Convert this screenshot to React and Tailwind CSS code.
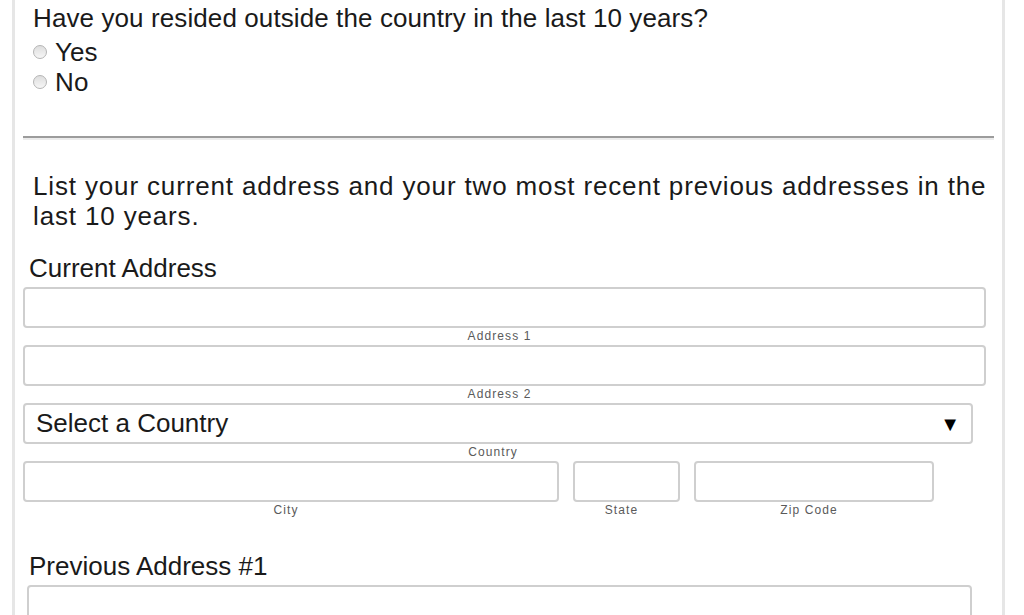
import React from "react";

const font = "font-['Liberation_Sans',Arial,Helvetica,sans-serif]";

function Radio({ label }) {
  return (
    <label className="flex items-center h-[30px] gap-[8px]">
      <span className="w-[14px] h-[14px] rounded-full border border-[#b5b5b5] bg-gradient-to-b from-[#dedede] to-[#f6f6f6]" />
      <span>{label}</span>
    </label>
  );
}

function Field({ label, className = "w-[963px]", children }) {
  return (
    <div className={className}>
      <div className="h-[41px] w-full rounded-[4px] border-2 border-[#cfcfcf] bg-white flex items-center">
        {children}
      </div>
      {label && (
        <div className="h-[17px] leading-[17px] text-center text-[12px] tracking-[1.1px] text-[#5a5a5a] pr-[10px]">
          {label}
        </div>
      )}
    </div>
  );
}

export default function App() {
  return (
    <div className={`h-[615px] overflow-hidden bg-white text-[#1a1a1a] ${font}`}>
      <div className="ml-[12px] w-[993px] min-h-[615px] border-x-[3px] border-[#e6e6e6] px-[8px]">
        {/* residence question */}
        <div className="pl-[10px] pt-[3px] text-[26px] leading-[30px] tracking-[0.1px]">
          <p>Have you resided outside the country in the last 10 years?</p>
          <div className="mt-[4px]">
            <Radio label="Yes" />
            <Radio label="No" />
          </div>
        </div>

        <hr className="mt-[39px] border-0 border-t-2 border-b-2 border-t-[#9c9c9c] border-b-[#ececec]" />

        <p className="pl-[10px] mt-[31px] text-[26px] leading-[30px] tracking-[0.85px]">
          List your current address and your two most recent previous addresses in the last 10 years.
        </p>

        {/* current address */}
        <h3 className="pl-[6px] mt-[22px] text-[26px] leading-[30px]">Current Address</h3>
        <div className="mt-[4px]">
          <Field label="Address 1" />
          <Field label="Address 2" />
          <Field label="Country" className="w-[950px]">
            <div className="flex w-full items-center justify-between pl-[11px] pr-[11px] text-[26px]">
              <span>Select a Country</span>
              <span className="text-[20px] text-black">▼</span>
            </div>
          </Field>
          <div className="flex gap-[14px]">
            <Field label="City" className="w-[536px]" />
            <Field label="State" className="w-[107px]" />
            <Field label="Zip Code" className="w-[240px]" />
          </div>
        </div>

        {/* previous address */}
        <h3 className="pl-[6px] mt-[32px] text-[26px] leading-[30px]">Previous Address #1</h3>
        <div className="mt-[4px] ml-[4px]">
          <Field className="w-[945px]" />
        </div>
      </div>
    </div>
  );
}
